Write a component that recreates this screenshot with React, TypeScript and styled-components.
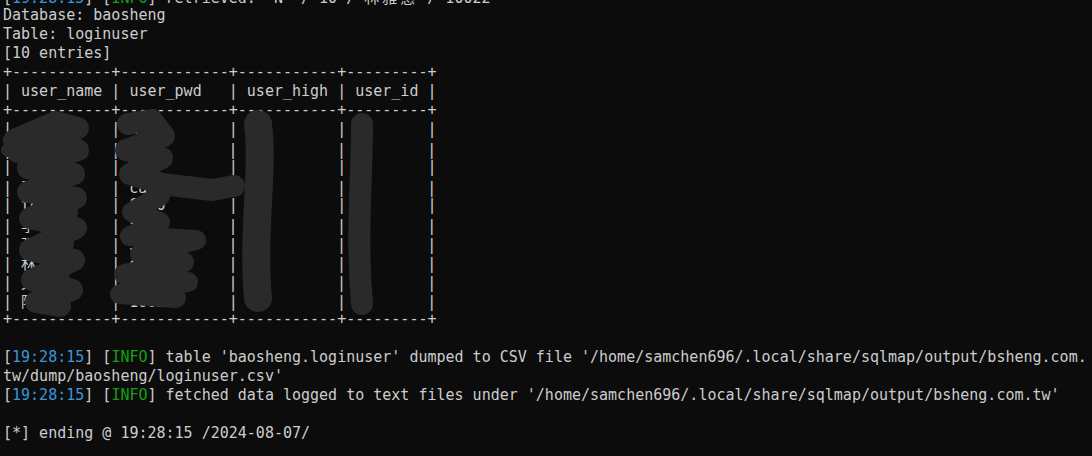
import React from "react";
import styled, { createGlobalStyle } from "styled-components";

const GlobalStyle = createGlobalStyle`
  html, body { margin: 0; padding: 0; background: #0c0c0c; }
`;

const Screen = styled.div`
  position: relative;
  width: 1092px;
  height: 456px;
  overflow: hidden;
  background: #0c0c0c;
`;

const Output = styled.div`
  margin-top: -13px;
  padding-left: 3px;
  font-family: "DejaVu Sans Mono", "Liberation Mono", "Noto Sans CJK TC", monospace;
  font-size: 15px;
  line-height: 19px;
  color: #cccccc;
  white-space: pre;
`;

const Line = styled.div`
  height: 19px;
`;

const Stamp = styled.span`
  color: #3a96dd;
`;

const Level = styled.span`
  color: #13a10e;
`;

const Wide = styled.span`
  font-family: "Noto Sans CJK TC", sans-serif;
  letter-spacing: 3px;
`;

const Redaction = styled.svg`
  position: absolute;
  left: 0;
  top: 0;
  pointer-events: none;
`;

const Scribble = styled.path<{ $w: number }>`
  fill: none;
  stroke: #2a2a2a;
  stroke-width: ${(p) => p.$w};
  stroke-linecap: round;
  stroke-linejoin: round;
`;

const isWide = (ch: string) => /[\u2e80-\u9fff\uff00-\uffef]/.test(ch);
const cells = (s: string) => Array.from(s).reduce((n, c) => n + (isWide(c) ? 2 : 1), 0);
const pad = (s: string, w: number) => s + " ".repeat(Math.max(0, w - cells(s)));

const renderText = (s: string) => {
  const out: React.ReactNode[] = [];
  let buf = "";
  let wide = "";
  Array.from(s).forEach((c) => {
    if (isWide(c)) {
      if (buf) { out.push(buf); buf = ""; }
      wide += c;
    } else {
      if (wide) { out.push(<Wide key={out.length}>{wide}</Wide>); wide = ""; }
      buf += c;
    }
  });
  if (buf) out.push(buf);
  if (wide) out.push(<Wide key={out.length}>{wide}</Wide>);
  return out;
};

const border = "+" + "-".repeat(11) + "+" + "-".repeat(12) + "+" + "-".repeat(11) + "+" + "-".repeat(9) + "+";

const rows: [string, string, string, string][] = [
  ["admin", "a12", "N", "1"],
  ["陳小姐", "1e2", "N", "2"],
  ["user", "123", "N", "3"],
  ["王先生", "cadminabc", "N", "4"],
  ["test", "0000", "N", "5"],
  ["李小姐", "abc", "N", "6"],
  ["張先生", "5678", "N", "7"],
  ["林小姐", "qwer12", "N", "8"],
  ["黃先生", "a123491", "N", "9"],
  ["阿惠", "10022", "N", "10"],
];

const rowText = (r: [string, string, string, string]) =>
  "| " + pad(r[0], 9) + " | " + pad(r[1], 10) + " | " + pad(r[2], 9) + " | " + pad(r[3], 7) + " |";

const Info = ({ children }: { children: React.ReactNode }) => (
  <Line>
    [<Stamp>19:28:15</Stamp>] [<Level>INFO</Level>] {children}
  </Line>
);

export default function App() {
  return (
    <>
      <GlobalStyle />
      <Screen>
        <Output>
          <Info>retrieved: 'N' / 10 / {renderText("林雅惠")} / 10022</Info>
          <Line>Database: baosheng</Line>
          <Line>Table: loginuser</Line>
          <Line>[10 entries]</Line>
          <Line>{border}</Line>
          <Line>| user_name | user_pwd   | user_high | user_id |</Line>
          <Line>{border}</Line>
          {rows.map((r, i) => (
            <Line key={i}>{renderText(rowText(r))}</Line>
          ))}
          <Line>{border}</Line>
          <Line />
          <Info>
            table 'baosheng.loginuser' dumped to CSV file '/home/samchen696/.local/share/sqlmap/output/bsheng.com.
          </Info>
          <Line>tw/dump/baosheng/loginuser.csv'</Line>
          <Info>fetched data logged to text files under '/home/samchen696/.local/share/sqlmap/output/bsheng.com.tw'</Info>
          <Line />
          <Line>[*] ending @ 19:28:15 /2024-08-07/</Line>
        </Output>
        <Redaction width="1092" height="456" viewBox="0 0 1092 456">
          <Scribble
            $w={22}
            d="M14,140 L56,122 L78,128 L18,152 L78,150 L28,168 L74,174 L28,192 L76,198 L30,218 L76,228 L30,250 L74,260 L32,280 L72,290 L36,302 L60,306"
          />
          <Scribble $w={14} d="M8,150 L40,132" />
          <Scribble $w={12} d="M72,212 L60,300" />
          <Scribble
            $w={22}
            d="M128,124 L152,120 L164,136 L126,150 L162,158 L130,174 L162,184 L212,190 L234,186"
          />
          <Scribble
            $w={20}
            d="M160,196 L132,212 L160,222 L130,236 L196,240 L140,254 L184,262 L124,274 L188,282 L120,294 L176,298"
          />
          <Scribble $w={28} d="M258,124 C264,170 252,230 258,298" />
          <Scribble $w={22} d="M362,124 C362,180 356,236 362,304" />
        </Redaction>
      </Screen>
    </>
  );
}
